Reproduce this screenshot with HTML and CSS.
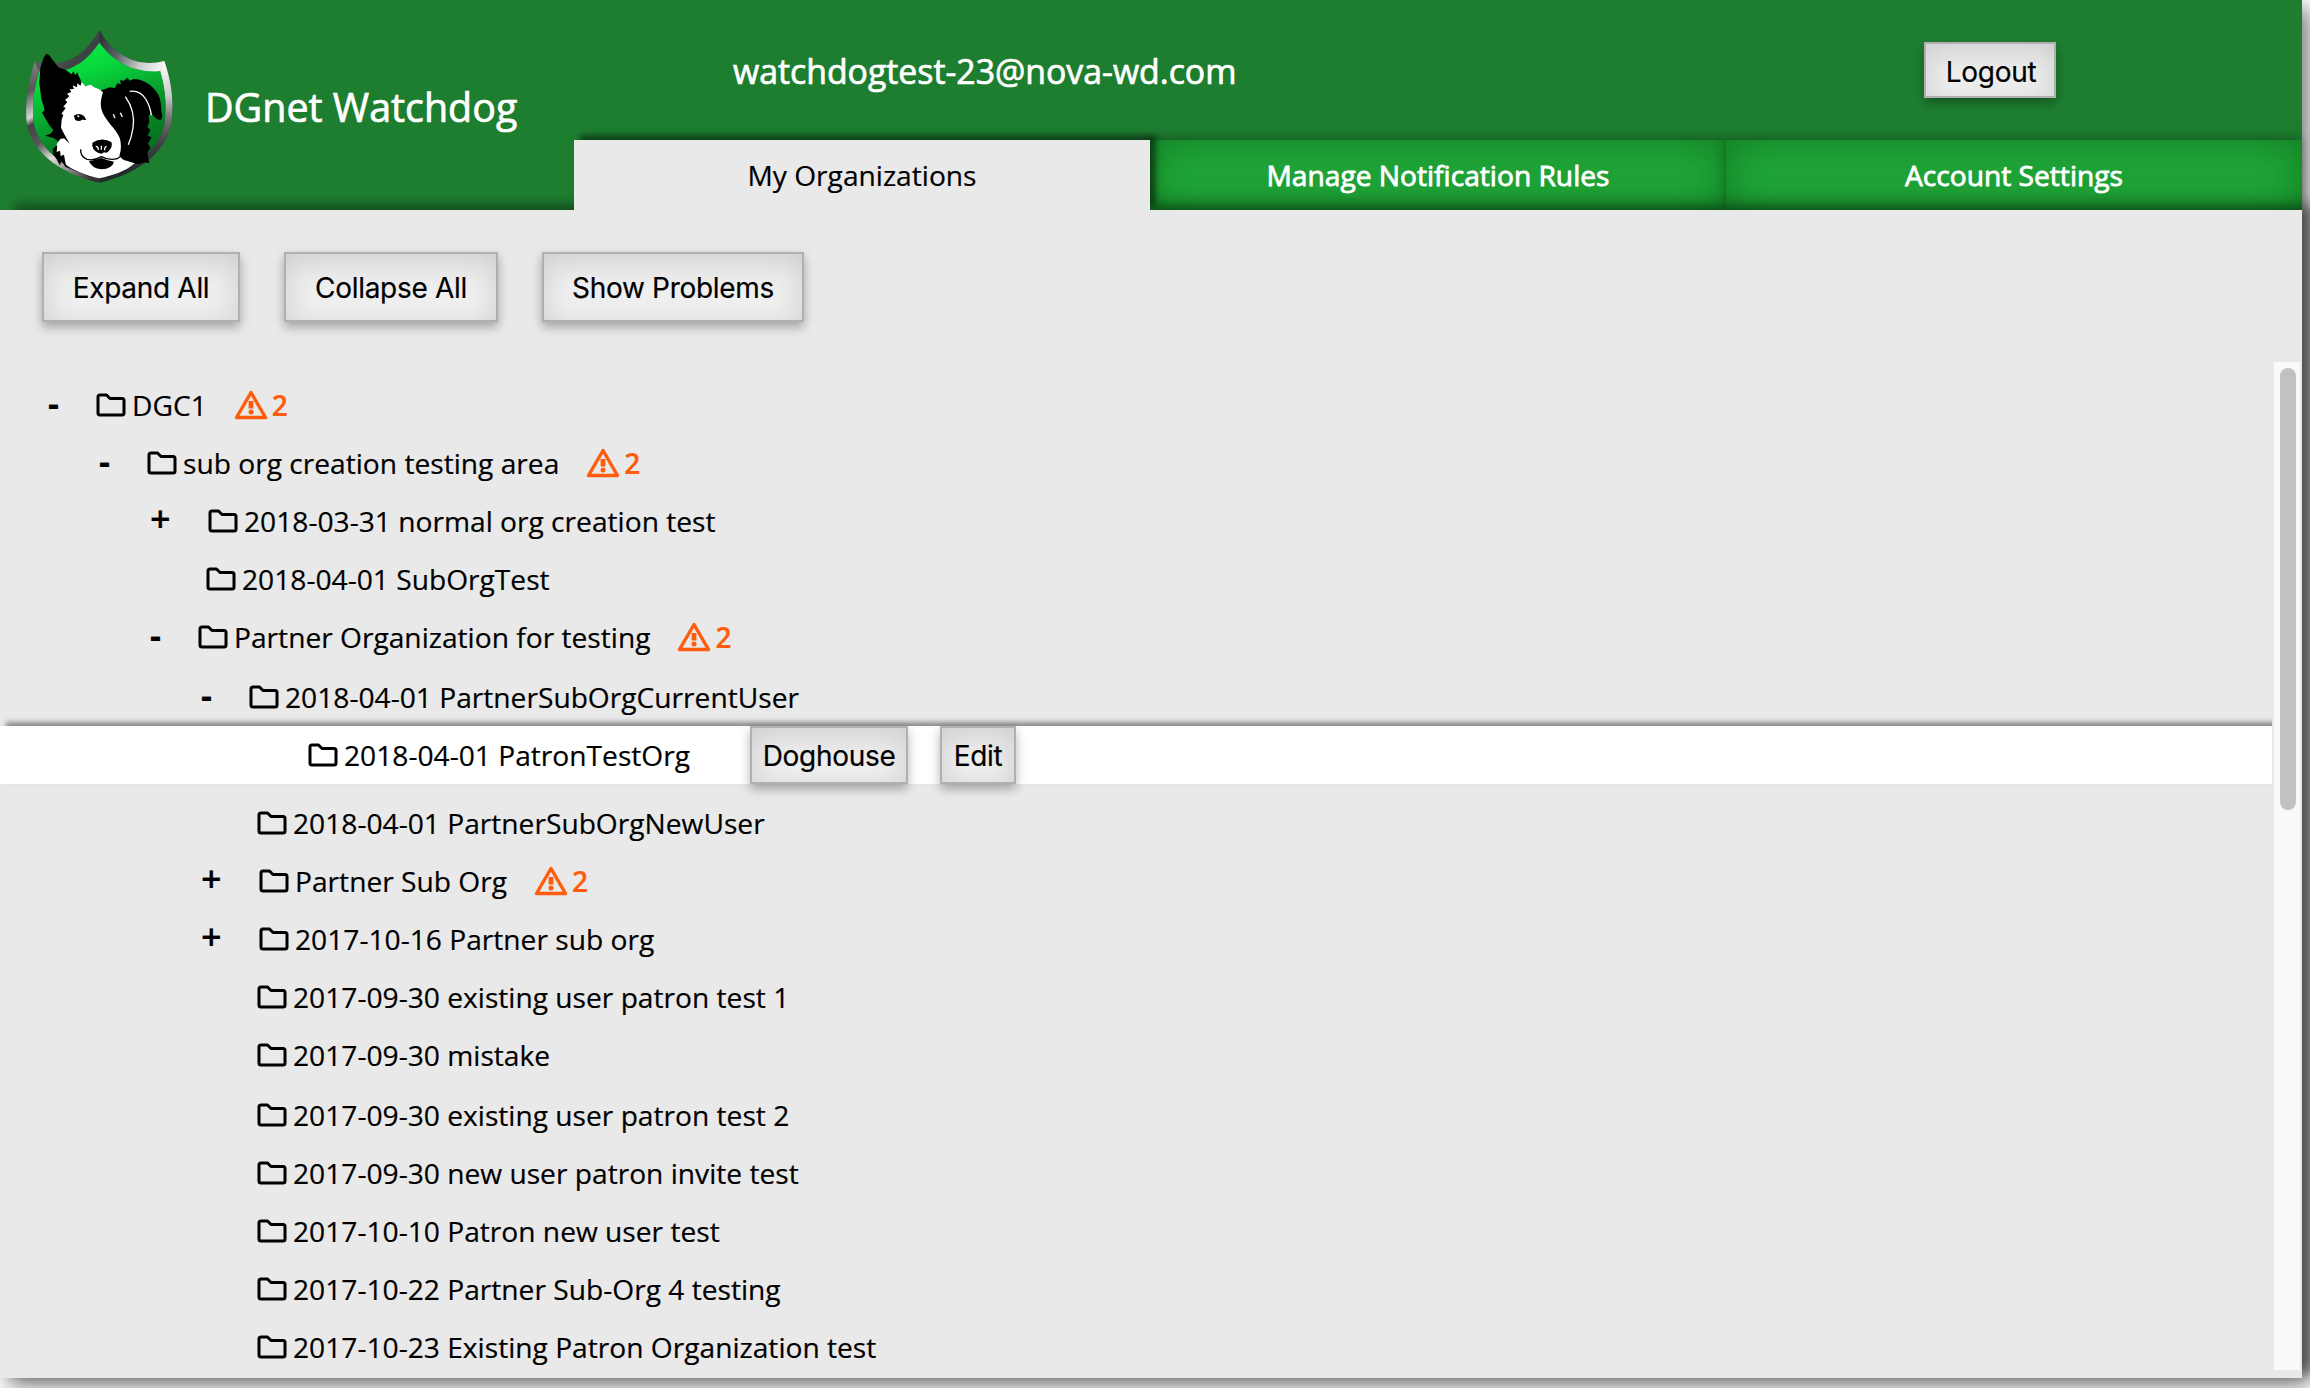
FILE: index.html
```html
<!DOCTYPE html>
<html lang="en">
<head>
<meta charset="utf-8">
<title>DGnet Watchdog</title>
<link rel="stylesheet" href="styles.css">
</head>
<body>
<svg class="defs" width="0" height="0" aria-hidden="true">
  <symbol id="folder" viewBox="0 0 30 24">
    <path d="M4 2H10.500L14 5.500H26Q28 5.500 28 7.500V20Q28 22 26 22H4Q2 22 2 20V4Q2 2 4 2Z" fill="none" stroke="currentColor" stroke-width="3" stroke-linejoin="round"/>
  </symbol>
  <symbol id="warn" viewBox="0 0 34 30">
    <path d="M17 2.500L31.500 27.500H2.500Z" fill="none" stroke="currentColor" stroke-width="3.400" stroke-linejoin="round"/>
    <path d="M14.600 11H19.400V18.500H14.600Z" fill="currentColor"/><circle cx="17" cy="22" r="2.500" fill="currentColor"/>
  </symbol>
</svg>
<div class="app">
  <header class="header">
    <div class="brand">
      <svg class="logo" viewBox="0 0 540 540">
        <defs>
          <linearGradient id="rim" x1="0" y1="0" x2="1" y2="1">
            <stop offset="0" stop-color="#777"/><stop offset=".28" stop-color="#3c4242"/><stop offset=".42" stop-color="#4a5252"/><stop offset=".58" stop-color="#777"/><stop offset=".8" stop-color="#2d3436"/><stop offset="1" stop-color="#555"/>
          </linearGradient>
          <linearGradient id="rimright" x1="268" y1="60" x2="466" y2="150" gradientUnits="userSpaceOnUse">
            <stop offset="0" stop-color="#2d3436"/><stop offset=".3" stop-color="#586264"/><stop offset=".65" stop-color="#c9cccd"/><stop offset="1" stop-color="#fff"/>
          </linearGradient>
          <linearGradient id="rimside" x1="0" y1="125" x2="0" y2="460" gradientUnits="userSpaceOnUse">
            <stop offset="0" stop-color="#fff"/><stop offset=".3" stop-color="#ccc"/><stop offset=".5" stop-color="#777"/><stop offset=".72" stop-color="#3f4444"/><stop offset="1" stop-color="#222b2d"/>
          </linearGradient>
          <linearGradient id="rimleft" x1="50" y1="125" x2="240" y2="480" gradientUnits="userSpaceOnUse">
            <stop offset="0" stop-color="#8b8b8b"/><stop offset=".2" stop-color="#555"/><stop offset=".38" stop-color="#d6d6d6"/><stop offset=".43" stop-color="#444"/><stop offset=".58" stop-color="#555"/><stop offset=".72" stop-color="#ddd"/><stop offset=".86" stop-color="#888"/><stop offset="1" stop-color="#333"/>
          </linearGradient>
          <linearGradient id="field" x1="0" y1="0" x2=".35" y2="1">
            <stop offset="0" stop-color="#06ee42"/><stop offset=".3" stop-color="#08d93c"/><stop offset=".7" stop-color="#078b28"/><stop offset="1" stop-color="#056d1d"/>
          </linearGradient>
        </defs>
        <path fill="url(#rim)" d="M268 29C240 78 200 124 140 128Q106 131 74 126C54 190 44 260 50 306C62 390 140 458 268 488C396 458 474 390 485 300C492 240 483 180 463 123Q430 132 394 127C340 118 294 78 268 29Z"/>
        <path fill="url(#rimright)" d="M268 29C294 78 340 118 394 127Q430 132 463 123L450 153Q420 160 380 148C330 134 296 106 268 68Z"/>
        <path fill="url(#rimside)" d="M463 123C483 180 492 240 485 300C474 390 396 458 268 488V474C380 446 455 384 465 296C470 240 462 190 450 153Z"/>
        <path fill="url(#rimleft)" d="M74 126C54 190 44 260 50 306C62 390 140 458 268 488V474C156 446 80 380 70 300C66 250 74 200 88 154Z"/>
        <path fill="url(#field)" d="M268 68C236 114 204 144 140 156L88 154C74 200 66 250 70 300C80 380 156 446 268 474C380 446 455 384 465 296C470 240 462 190 450 153Q420 158 380 148C330 134 296 106 268 68Z"/>
        <path fill="#000" d="M111 101Q118 104 126 117L145 142L169 151L184 163L191 154L195 166L202 157L206 168L212 180L215 195L274 211L300 202L315 204L322 190L333 193L330 181L341 182L353 173L359 182L371 177C399 178 423 193 440 216C457 239 451 268 457 288L453 299C443 301 431 291 424 278L416 288L418 305L412 321L421 330L413 347L425 352L414 370L421 384L412 398L418 430L405 427L382 433L332 415L300 470H240L166 440L154 421L150 436L140 418L131 404L135 385L147 366L131 354L105 347L122 341L130 330L118 316L96 278L104 270L94 236L88 190L91 145Q101 104 111 101Z"/>
        <path fill="#fff" d="M216 187L226 199L242 194L252 202Q270 207 279 217C275 230 270 248 274 266C282 300 319 326 329 353Q337 379 328 408L340 420L374 430C344 456 307 467 268 475C230 467 188 451 164 431L158 409L151 422L148 403L139 399L136 384L142 369L151 357L162 355L179 371L164 345L153 323L155 299L160 284L154 282L167 264L160 260L172 246L165 240L178 229L171 221L184 216L179 208L192 207L188 196L201 202L202 190L211 197Z"/>
        <path fill="#000" d="M191 287Q207 277 222 288L229 300L216 299Q207 307 195 299Q194 292 191 287ZM247 368Q276 350 304 366Q309 380 298 391Q293 401 282 397L274 401L264 398Q244 388 247 368ZM237 424Q257 420 274 414Q290 421 312 425Q307 446 274 448Q246 446 237 424Z"/>
        <path fill="#000" d="M128 388L142 374L140 396L150 392L152 408L162 404L168 438L152 424L150 434L138 412L130 404Z"/>
        <path fill="none" stroke="#000" stroke-width="4" d="M212 388Q211 411 231 418Q253 423 274 410Q296 422 322 416L330 410"/>
        <path fill="none" stroke="#fff" stroke-width="4" d="M257 379Q265 379 265 390M290 379Q283 380 284 391M274 377V389M346 230Q377 273 369 324Q365 351 355 374M359 214Q390 210 407 237Q421 260 424 286M310 283L315 294M331 278L337 291"/>
        <circle cx="205" cy="289" r="3" fill="#fff"/>
      </svg>
      <h1 class="title">DGnet Watchdog</h1>
    </div>
    <div class="main">
      <div class="account">
        <span class="email">watchdogtest-23@nova-wd.com</span>
        <button class="btn logout">Logout</button>
      </div>
      <nav class="tabs">
        <a class="tab active">My Organizations</a>
        <a class="tab">Manage Notification Rules</a>
        <a class="tab">Account Settings</a>
      </nav>
    </div>
  </header>
  <main class="content">
    <div class="toolbar">
      <button class="btn expand">Expand All</button>
      <button class="btn collapse">Collapse All</button>
      <button class="btn problems">Show Problems</button>
    </div>
    <div class="scroller">
      <div class="tree">
        <div class="row d0"><span class="toggle minus">-</span><svg class="folder"><use href="#folder"/></svg><span class="name">DGC1</span><svg class="warn"><use href="#warn"/></svg><span class="count">2</span></div>
        <div class="row d1"><span class="toggle minus">-</span><svg class="folder"><use href="#folder"/></svg><span class="name">sub org creation testing area</span><svg class="warn"><use href="#warn"/></svg><span class="count">2</span></div>
        <div class="row d2"><span class="toggle plus">+</span><svg class="folder"><use href="#folder"/></svg><span class="name">2018-03-31 normal org creation test</span></div>
        <div class="row d2"><span class="toggle"></span><svg class="folder"><use href="#folder"/></svg><span class="name">2018-04-01 SubOrgTest</span></div>
        <div class="row d2"><span class="toggle minus">-</span><svg class="folder"><use href="#folder"/></svg><span class="name">Partner Organization for testing</span><svg class="warn"><use href="#warn"/></svg><span class="count">2</span></div>
        <div class="row d3 spaced"><span class="toggle minus">-</span><svg class="folder"><use href="#folder"/></svg><span class="name">2018-04-01 PartnerSubOrgCurrentUser</span></div>
        <div class="row d4 selected"><span class="toggle"></span><svg class="folder"><use href="#folder"/></svg><span class="name">2018-04-01 PatronTestOrg</span><button class="btn doghouse">Doghouse</button><button class="btn edit">Edit</button></div>
        <div class="row d3"><span class="toggle"></span><svg class="folder"><use href="#folder"/></svg><span class="name">2018-04-01 PartnerSubOrgNewUser</span></div>
        <div class="row d3"><span class="toggle plus">+</span><svg class="folder"><use href="#folder"/></svg><span class="name">Partner Sub Org</span><svg class="warn"><use href="#warn"/></svg><span class="count">2</span></div>
        <div class="row d3"><span class="toggle plus">+</span><svg class="folder"><use href="#folder"/></svg><span class="name">2017-10-16 Partner sub org</span></div>
        <div class="row d3"><span class="toggle"></span><svg class="folder"><use href="#folder"/></svg><span class="name">2017-09-30 existing user patron test 1</span></div>
        <div class="row d3"><span class="toggle"></span><svg class="folder"><use href="#folder"/></svg><span class="name">2017-09-30 mistake</span></div>
        <div class="row d3 spaced"><span class="toggle"></span><svg class="folder"><use href="#folder"/></svg><span class="name">2017-09-30 existing user patron test 2</span></div>
        <div class="row d3"><span class="toggle"></span><svg class="folder"><use href="#folder"/></svg><span class="name">2017-09-30 new user patron invite test</span></div>
        <div class="row d3"><span class="toggle"></span><svg class="folder"><use href="#folder"/></svg><span class="name">2017-10-10 Patron new user test</span></div>
        <div class="row d3"><span class="toggle"></span><svg class="folder"><use href="#folder"/></svg><span class="name">2017-10-22 Partner Sub-Org 4 testing</span></div>
        <div class="row d3"><span class="toggle"></span><svg class="folder"><use href="#folder"/></svg><span class="name">2017-10-23 Existing Patron Organization test</span></div>
      </div>
      <div class="scrollbar"><div class="thumb"></div></div>
    </div>
  </main>
</div>
</body>
</html>
```

FILE: styles.css
```css
* { box-sizing: border-box; }
body {
  margin: 0;
  height: 1388px;
  overflow: hidden;
  background: #fff;
  color: #000;
  font-family: "Open Sans", sans-serif;
  font-size: 28.16px;
  -webkit-text-stroke: .2px currentColor;
}
.defs { display: block; }
.app {
  display: flex;
  flex-direction: column;
  width: 2302px;
  height: 1378px;
  background: #1e7e30;
  box-shadow: 8px 8px 20px rgba(0, 0, 0, .5);
}
.header { display: flex; height: 210px; }
.brand { display: flex; width: 574px; padding: 20px 0 0 10px; }
.logo { width: 180px; height: 180px; flex: none; }
.title {
  margin: 60px 0 0 15px;
  color: #fff;
  font-size: 39.4px;
  font-weight: 400;
  line-height: 54px;
  white-space: nowrap;
  -webkit-text-stroke-width: .7px;
}
.main { flex: 1; }
.account {
  display: flex;
  justify-content: space-between;
  height: 140px;
  padding: 42px 246px 0 159px;
}
.email { color: #fff; font-size: 33.8px; line-height: 58px; -webkit-text-stroke-width: .7px; }
.tabs { display: grid; grid-template-columns: repeat(3, 1fr); height: 70px; }
.tab {
  display: flex;
  align-items: center;
  justify-content: center;
  color: #fff;
  background: #1fa638;
  box-shadow: inset 0 0 40px rgba(0, 60, 0, .4), 0 -2px 10px rgba(0, 0, 0, .3);
  -webkit-text-stroke-width: .8px;
}
.tab.active {
  position: relative;
  z-index: 2;
  color: #000;
  background: #e9e9e9;
  box-shadow: 6px -5px 6px rgba(0, 0, 0, .5);
  clip-path: inset(-20px -20px 0 -20px);
  -webkit-text-stroke-width: .2px;
}
.content {
  position: relative;
  z-index: 1;
  height: 1168px;
  background: #e9e9e9;
  box-shadow: 14px -5px 12px rgba(0, 0, 0, .45);
}
.toolbar { display: flex; height: 152px; padding: 42px 42px 0; gap: 44px; }
.btn {
  flex: none;
  height: 70px;
  padding: 2px 0 0;
  border: 2px solid #b0b0b0;
  background: #efefef;
  box-shadow: inset 0 8px 30px rgba(0, 0, 0, .14), 0 5px 10px rgba(0, 0, 0, .3);
  color: #000;
  font: 28px Inter, "Liberation Sans", sans-serif;
  letter-spacing: -.3px;
}
.expand { width: 198px; }
.collapse { width: 214px; }
.problems { width: 262px; }
.logout { width: 132px; height: 56px; padding: 3px 0 0 2px; }
.scroller { display: flex; justify-content: space-between; height: 1008px; padding-right: 2px; }
.tree { width: 2272px; padding-top: 14px; }
.scrollbar { width: 26px; padding: 6px; background: #fafafa; }
.thumb { width: 16px; height: 442px; border-radius: 8px; background: #c1c1c1; }
.row { display: flex; align-items: center; height: 58px; line-height: 58px; white-space: nowrap; }
.spaced { margin-top: 2px; }
.d0 { padding-left: 48px; }
.d1 { padding-left: 99px; }
.d2 { padding-left: 150px; }
.d3 { padding-left: 201px; }
.d4 { padding-left: 252px; }
.toggle { flex: none; width: 56px; height: 58px; font-size: 34px; font-weight: 700; line-height: 54px; }
.minus { width: 48px; }
.plus { width: 58px; padding-left: 0; font-weight: 600; font-size: 36px; line-height: 53px; }
.folder { flex: none; width: 30px; height: 24px; }
.name { margin-left: 6px; }
.warn { flex: none; width: 34px; height: 30px; margin-left: 27px; color: #ff5d0d; }
.count { margin-left: 4px; color: #ff5d0d; font-weight: 600; }
.selected {
  margin-bottom: 10px;
  background: #fff;
  box-shadow: 6px -4px 5px rgba(0, 0, 0, .4);
  clip-path: inset(-12px 0 -20px 0);
}
.selected .btn { height: 58px; }
.doghouse { width: 158px; margin-left: 60px; }
.edit { width: 76px; margin-left: 32px; }
```
